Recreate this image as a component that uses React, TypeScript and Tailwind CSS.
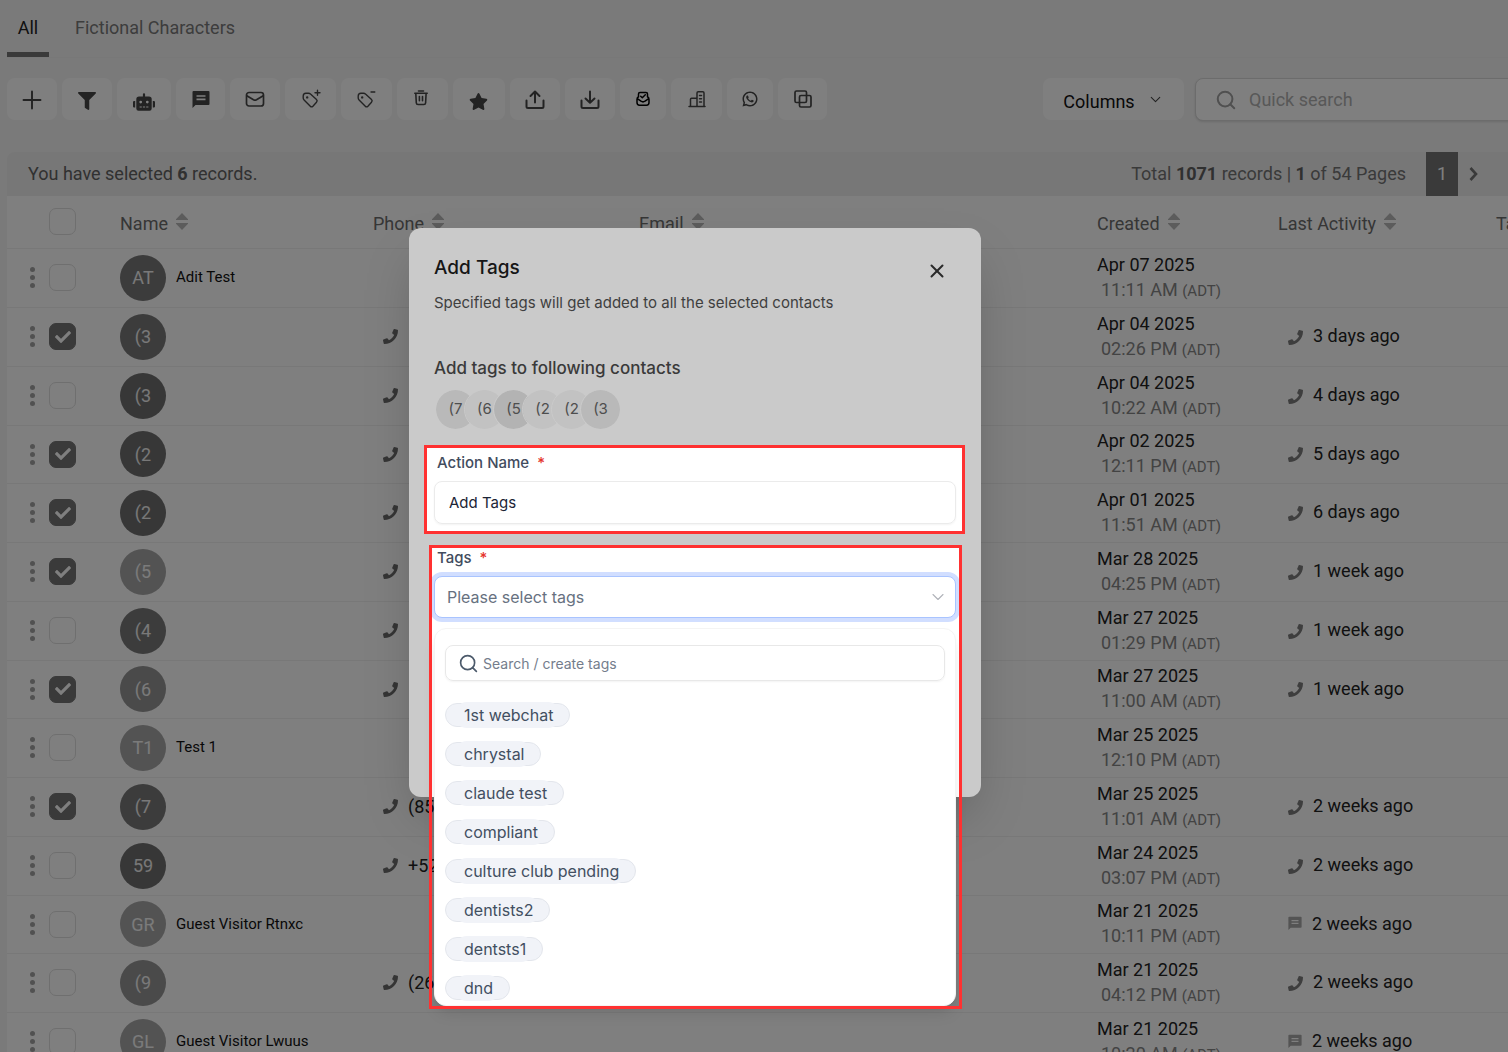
import React from "react";
import { FaCheck, FaFilter, FaPhone, FaRobot, FaStar } from "react-icons/fa";
import { RiWhatsappLine } from "react-icons/ri";
import { ChevronDown, Search, X } from "lucide-react";

type Row = {
  initials: string;
  shade: string;
  name?: string;
  checked?: boolean;
  phone?: string;
  date: string;
  time: string;
  activity?: string;
  kind?: "call" | "chat";
};

const DARK = "bg-[#787878]";
const DARKER = "bg-[#6e6e6e]";
const MID = "bg-[#949494]";
const LIGHT = "bg-[#a6a6a6]";

const rows: Row[] = [
  { initials: "AT", shade: DARK, name: "Adit Test", date: "Apr 07 2025", time: "11:11 AM" },
  { initials: "(3", shade: DARK, checked: true, phone: "", date: "Apr 04 2025", time: "02:26 PM", activity: "3 days ago", kind: "call" },
  { initials: "(3", shade: DARKER, phone: "", date: "Apr 04 2025", time: "10:22 AM", activity: "4 days ago", kind: "call" },
  { initials: "(2", shade: DARKER, checked: true, phone: "", date: "Apr 02 2025", time: "12:11 PM", activity: "5 days ago", kind: "call" },
  { initials: "(2", shade: DARKER, checked: true, phone: "", date: "Apr 01 2025", time: "11:51 AM", activity: "6 days ago", kind: "call" },
  { initials: "(5", shade: LIGHT, checked: true, phone: "", date: "Mar 28 2025", time: "04:25 PM", activity: "1 week ago", kind: "call" },
  { initials: "(4", shade: DARK, phone: "", date: "Mar 27 2025", time: "01:29 PM", activity: "1 week ago", kind: "call" },
  { initials: "(6", shade: MID, checked: true, phone: "", date: "Mar 27 2025", time: "11:00 AM", activity: "1 week ago", kind: "call" },
  { initials: "T1", shade: LIGHT, name: "Test 1", date: "Mar 25 2025", time: "12:10 PM" },
  { initials: "(7", shade: DARK, checked: true, phone: "(85", date: "Mar 25 2025", time: "11:01 AM", activity: "2 weeks ago", kind: "call" },
  { initials: "59", shade: DARKER, phone: "+52", date: "Mar 24 2025", time: "03:07 PM", activity: "2 weeks ago", kind: "call" },
  { initials: "GR", shade: LIGHT, name: "Guest Visitor Rtnxc", date: "Mar 21 2025", time: "10:11 PM", activity: "2 weeks ago", kind: "chat" },
  { initials: "(9", shade: MID, phone: "(26", date: "Mar 21 2025", time: "04:12 PM", activity: "2 weeks ago", kind: "call" },
  { initials: "GL", shade: LIGHT, name: "Guest Visitor Lwuus", date: "Mar 21 2025", time: "10:20 AM", activity: "2 weeks ago", kind: "chat" },
];

const tags = ["1st webchat", "chrystal", "claude test", "compliant", "culture club pending", "dentists2", "dentsts1", "dnd"];

const selected = [
  { text: "(7", shade: "bg-[#b9b9b9]" },
  { text: "(6", shade: "bg-[#c2c2c2]" },
  { text: "(5", shade: "bg-[#b3b3b3]" },
  { text: "(2", shade: "bg-[#c2c2c2]" },
  { text: "(2", shade: "bg-[#c2c2c2]" },
  { text: "(3", shade: "bg-[#b9b9b9]" },
];

function Line({ w = 20, h = 20, sw = 1.6, children }: { w?: number; h?: number; sw?: number; children: React.ReactNode }) {
  return (
    <svg width={w} height={h} viewBox={`0 0 ${w} ${h}`} fill="none" stroke="currentColor" strokeWidth={sw} strokeLinecap="round" strokeLinejoin="round" aria-hidden="true">
      {children}
    </svg>
  );
}

function MessageIcon({ size }: { size: number }) {
  return (
    <svg width={size} height={size} viewBox="0 0 18 18" fill="currentColor" fillRule="evenodd" aria-hidden="true">
      <path d="M1.5 1h15a1 1 0 0 1 1 1v12a1 1 0 0 1-1 1H3.5L.5 18V2a1 1 0 0 1 1-1zM4.5 5.2v1.6h9V5.2zM4.5 8.6v1.6h9V8.6z" />
    </svg>
  );
}

const TAG = "M2.2 7.2c0-2.3.6-3 2.7-3h2.6c.8 0 1.4.2 2 .8l6 5.6c.9.9.9 1.7 0 2.6l-3.6 4c-.9.9-1.8.9-2.6 0l-6.200-6.300c-.6-.6-.9-1.100-.9-1.900z";

const tools = [
  { label: "Add contact", w: "w-[50px] pt-px", icon: <Line sw={1.9}><path d="M10 1.5v17M1.5 10h17" /></Line> },
  { label: "Filter", w: "w-[50px] pt-1", icon: <FaFilter size={18} /> },
  { label: "Automation", w: "w-[54px] pt-1.5", icon: <FaRobot size={22} /> },
  { label: "Send message", w: "w-[49px]", icon: <MessageIcon size={18} /> },
  { label: "Send email", w: "w-[50px]", icon: <Line sw={1.7}><rect x="1.5" y="3.500" width="17" height="13.500" rx="2.500" /><path d="M2.200 7l6.300 3.800c.9.5 2.100.5 3 0l6.300-3.800" /></Line> },
  { label: "Add tags", w: "w-[51px]", icon: <Line sw={1.4}><path d={TAG} /><circle cx="6.200" cy="8.400" r=".5" fill="currentColor" /><path d="M16.500 1.200v5M14 3.700h5" /></Line> },
  { label: "Remove tags", w: "w-[51px] pr-0.5", icon: <Line sw={1.4}><path d={TAG} /><circle cx="6.200" cy="8.400" r=".5" fill="currentColor" /><path d="M15 3h3.800" /></Line> },
  { label: "Delete", w: "w-[51px] pr-1 pb-0.5", icon: <Line sw={1.6}><path d="M3.800 5.200h12.400M7.500 3h5M4.800 5.500l.5 9.500c.1 1 .8 1.500 1.700 1.500h5.900c1 0 1.600-.6 1.700-1.500l.5-9.500M8.400 8.500v4.200M11.500 8.500v4.200" /></Line> },
  { label: "Favorite", w: "w-[52px] pt-1 pr-0.5", icon: <FaStar size={19} /> },
  { label: "Upload", w: "w-[50px] pt-px", icon: <Line sw={2}><path d="M1.500 10.500v6c0 .9.500 1.500 1.500 1.500h14c1 0 1.500-.6 1.500-1.500v-6M10 12.500V1.800M5.500 6L10 1.500 14.500 6" /></Line> },
  { label: "Download", w: "w-[50px] pt-px", icon: <Line sw={2}><path d="M1.500 10.500v6c0 .9.500 1.500 1.500 1.500h14c1 0 1.500-.6 1.500-1.500v-6M10 1.500v11M5.500 8.500l4.500 4.300 4.500-4.300" /></Line> },
  { label: "Verify email", w: "w-[46px] text-black", icon: <Line w={14} h={16} sw={1.5}><path d="M2.500 6V3c0-1 .6-1.500 1.500-1.500h6c.9 0 1.500.5 1.500 1.500v3M2.500 5.800C1.400 6.300 1 7 1 8.200v3.300c0 1.700.8 2.700 2.500 2.700h7c1.700 0 2.500-1 2.500-2.700V8.200c0-1.200-.4-1.900-1.500-2.400M1.300 7.600l3.700 2.600c1.200.8 2.800.8 4 0l3.700-2.600M4.700 5.200l1.600 1.500 3-2.900" /></Line> },
  { label: "Assign company", w: "w-[51px]", icon: <Line w={18} h={18} sw={1.5}><path d="M1 16.500h16M9 16V3c0-.8.400-1.300 1.200-1.300h4.600c.8 0 1.200.5 1.200 1.300v13M2.500 16V9.300c0-.6.400-1 1-1H9M11.500 5.500h2M11.500 8.700h2M11.500 12h2" /></Line> },
  { label: "WhatsApp", w: "w-[46px]", icon: <RiWhatsappLine size={18} /> },
  { label: "Merge", w: "w-[49px]", icon: <Line w={18} h={18} sw={1.7}><rect x="1" y="1" width="11.500" height="11.500" rx="1.500" /><rect x="5.500" y="5.500" width="11.500" height="11.500" rx="1.500" /></Line> },
];

function Sort() {
  return (
    <svg width="12" height="17" viewBox="0 0 12 17" className="text-[#b8b8b8]" fill="currentColor" aria-hidden="true">
      <path d="M6 0l6 6.200V7H0v-.8zM6 17l6-6.200V10H0v.8z" />
    </svg>
  );
}

function HeadCell({ children }: { children: string }) {
  return (
    <th scope="col" className="p-0 text-left font-normal text-[#6c6c6c]">
      <button type="button" className="flex items-center gap-2 pt-1">
        {children}
        <span className="pb-1"><Sort /></span>
      </button>
    </th>
  );
}

function Tick({ checked, label }: { checked?: boolean; label: string }) {
  return (
    <label className="grid w-[27px] place-items-center">
      <input
        type="checkbox"
        defaultChecked={checked}
        aria-label={label}
        className="peer col-start-1 row-start-1 size-[27px] appearance-none rounded-[7px] border border-[#dedede] checked:border-[#747474] checked:bg-[#747474]"
      />
      <FaCheck size={16} className="pointer-events-none z-0 col-start-1 row-start-1 text-white opacity-0 peer-checked:opacity-100" />
    </label>
  );
}

function ContactRow({ row }: { row: Row }) {
  return (
    <tr className="h-[59px] border-b border-[#f1f1f1] nth-[4n]:h-[58px]">
      <td className="p-0">
        <button type="button" aria-label="Row actions" className="ml-[23px] flex flex-col gap-[3px]">
          <span className="size-[5px] rounded-full bg-[#a3a3a3]" />
          <span className="size-[5px] rounded-full bg-[#a3a3a3]" />
          <span className="size-[5px] rounded-full bg-[#a3a3a3]" />
        </button>
      </td>
      <td className="p-0"><Tick checked={row.checked} label={`Select ${row.name ?? row.initials}`} /></td>
      <td className="p-0">
        <div className="flex items-center gap-2.5">
          <span className={`grid size-[46px] shrink-0 place-items-center rounded-full text-[18px] text-white/90 ${row.shade}`}>{row.initials}</span>
          <span className="text-[15px] text-[#111]">{row.name}</span>
        </div>
      </td>
      <td className="p-0">
        {row.phone !== undefined && (
          <div className="flex items-center gap-2.5 pl-2.5 text-[#222]">
            <FaPhone size={15} className="text-[#6b6b6b]" />
            {row.phone}
          </div>
        )}
      </td>
      <td className="p-0" />
      <td className="p-0 leading-[25px]">
        <div className="text-[#222]">{row.date}</div>
        <div className="pl-1 text-[#868686]">
          {row.time} <span className="text-[15px]">(ADT)</span>
        </div>
      </td>
      <td className="p-0">
        {row.activity && (
          <div className="flex items-center gap-2.5 pb-0.5 pl-2.5 text-[#222]">
            <span className={row.kind === "call" ? "pt-[3px] text-[#7d7d7d]" : "text-[#a8a8a8]"}>
              {row.kind === "call" ? <FaPhone size={15} /> : <MessageIcon size={14} />}
            </span>
            {row.activity}
          </div>
        )}
      </td>
      <td className="p-0" />
    </tr>
  );
}

function ContactsPage() {
  return (
    <main className="pl-[7px] text-[18px]">
      <nav className="flex h-[58px] border-b border-[#f1f1f1]">
        <a href="#all" aria-current="page" className="flex h-[57px] w-[42px] items-center justify-center border-b-[5px] border-[#747474] pt-0.5 text-[#222]">All</a>
        <a href="#fictional" className="ml-[26px] flex h-[57px] items-center pb-0.5 text-[#7a7a7a]">Fictional Characters</a>
      </nav>

      <div className="mt-5 flex items-start justify-between">
        <div className="flex gap-[5px]">
          {tools.map((t) => (
            <button key={t.label} type="button" aria-label={t.label} className={`flex h-[42px] items-center justify-center rounded-lg bg-white text-[#474747] ${t.w}`}>
              {t.icon}
            </button>
          ))}
        </div>
        <div className="-mr-2.5 flex gap-[11px]">
          <button type="button" className="flex h-[42px] w-[141px] items-center justify-center gap-3 rounded-lg bg-white pt-1 text-[#111]">
            Columns
            <ChevronDown size={17} strokeWidth={1.5} className="mb-1 text-[#444]" />
          </button>
          <label className="flex h-[43px] w-[323px] items-center gap-3 rounded-lg border border-[#d8d8d8] bg-white pl-[19px] shadow-sm">
            <Search size={22} strokeWidth={2.2} className="shrink-0 text-[#a0a0a0]" />
            <input type="search" aria-label="Quick search" placeholder="Quick search" className="w-full bg-transparent outline-none placeholder:text-[#b0b0b0]" />
          </label>
        </div>
      </div>

      <div className="mt-[31px] flex h-11 items-center justify-between rounded-tl-lg bg-[#eeeeee] pl-[21px] text-[#626262]">
        <p className="pb-0.5">You have selected <b>6</b> records.</p>
        <div className="flex items-center text-[#747474]">
          <p className="pb-0.5">Total <b className="text-[#606060]">1071</b> records | <b className="text-[#606060]">1</b> of 54 Pages</p>
          <button type="button" className="ml-5 h-11 w-8 bg-[#747474] pb-0.5 text-white">1</button>
          <button type="button" aria-label="Next page" className="grid h-11 w-[50px] justify-start pl-[11px] text-[#747474]">
            <svg width="9" height="14" viewBox="0 0 9 14" fill="none" stroke="currentColor" strokeWidth="2.600" className="self-center" aria-hidden="true">
              <path d="M1.500 1l5.500 6-5.500 6" />
            </svg>
          </button>
        </div>
      </div>

      <table className="w-[calc(100%+148px)] table-fixed border-collapse bg-white">
        <colgroup>
          <col className="w-[42px]" />
          <col className="w-[71px]" />
          <col className="w-[253px]" />
          <col className="w-[266px]" />
          <col />
          <col className="w-[181px]" />
          <col className="w-[218px]" />
          <col className="w-[160px]" />
        </colgroup>
        <thead>
          <tr className="h-[52px] border-b border-[#f1f1f1]">
            <td className="p-0" />
            <td className="p-0"><Tick label="Select all" /></td>
            <HeadCell>Name</HeadCell>
            <HeadCell>Phone</HeadCell>
            <HeadCell>Email</HeadCell>
            <HeadCell>Created</HeadCell>
            <HeadCell>Last Activity</HeadCell>
            <HeadCell>Tags</HeadCell>
          </tr>
        </thead>
        <tbody>
          {rows.map((row, i) => <ContactRow key={i} row={row} />)}
        </tbody>
      </table>
    </main>
  );
}

function AddTagsDialog() {
  return (
    <div role="dialog" aria-labelledby="dialog-title" className="w-[572px] rounded-xl bg-[#cacaca] pt-7 shadow-2xl font-['Inter',sans-serif]">
      <div className="flex justify-between px-[25px]">
        <div>
          <h2 id="dialog-title" className="text-[19px] leading-6 font-medium text-[#161616]">Add Tags</h2>
          <p className="mt-[13px] text-[15px] leading-5 text-[#3f3f3f]">Specified tags will get added to all the selected contacts</p>
        </div>
        <button type="button" aria-label="Close" className="mt-1 mr-2 self-start text-[#2a2a2a]">
          <X size={22} strokeWidth={2.2} />
        </button>
      </div>

      <h3 className="mt-[43px] px-[25px] text-[17px] leading-6 font-medium text-[#3a3a3a]">Add tags to following contacts</h3>
      <div className="mt-[9px] flex px-[26px]">
        {selected.map((s, i) => (
          <span key={i} className={`-mr-3 grid size-[41px] place-items-center rounded-full border border-[#cacaca] bg-clip-padding text-[15px] text-[#4e4e4e] ${s.shade}`}>{s.text}</span>
        ))}
      </div>

      <div className="mt-[15px] mr-4 ml-[15px] border-3 border-[#ff3131] bg-white pt-[5px] pr-1.5 pb-[7px] pl-[7px]">
        <label htmlFor="action-name" className="block pl-[3px] text-[15px] leading-5 font-medium text-[#424c5e]">
          Action Name <span className="ml-1 text-[#e5352b]">*</span>
        </label>
        <input id="action-name" defaultValue="Add Tags" className="mt-2 block h-[43px] w-full rounded-lg border border-[#ebebeb] px-3.5 text-[15px] text-[#1c2536] shadow-xs outline-none" />
      </div>

      <div className="relative mt-[11px] mr-[19px] ml-5 h-[252px] bg-white pt-[3px] pr-1.5 pl-[5px]">
        <label htmlFor="tags" className="block pl-[3px] text-[15px] leading-5 font-medium text-[#424c5e]">
          Tags <span className="ml-1 text-[#e5352b]">*</span>
        </label>
        <div className="relative mt-2">
          <select id="tags" className="block h-[42px] w-full appearance-none rounded-lg border border-[#a9c4ff] bg-white px-3 text-[16px] text-[#67717f] ring-4 ring-[#d1deff] outline-none">
            <option>Please select tags</option>
          </select>
          <ChevronDown size={20} strokeWidth={1.3} className="pointer-events-none absolute top-[11px] right-2 text-[#b0b3b9]" />
        </div>

        <div className="absolute top-[83px] right-1.5 left-[5px] h-[378px] overflow-hidden rounded-xl border border-[#f4f4f4] bg-white px-2.5 pt-4 shadow-lg">
          <label className="flex h-9 items-center gap-1 rounded-lg border border-[#e8e8e8] pl-3 shadow-xs">
            <Search size={21} strokeWidth={1.9} className="shrink-0 text-[#4c5a6b]" />
            <input aria-label="Search or create tags" placeholder="Search / create tags" className="w-full text-[14px] outline-none placeholder:text-[#747d8c]" />
          </label>
          <ul className="mt-[22px] flex flex-col items-start gap-[15px]">
            {tags.map((tag) => (
              <li key={tag} className="h-6">
                <button type="button" className="flex h-6 items-center rounded-full border border-[#e3e6ec] bg-[#f1f3f8] px-2 text-[16px] text-[#424f61]">
                  <span className="h-[26px] rounded-full bg-[#f1f3f8] pr-2 pl-2.5 leading-[26px]">{tag}</span>
                </button>
              </li>
            ))}
          </ul>
        </div>
        <div className="pointer-events-none absolute inset-x-0 top-0 h-[464px] border-3 border-[#ff3131]" />
      </div>
    </div>
  );
}

export default function App() {
  return (
    <div className="relative h-screen overflow-hidden bg-[#f5f5f5] font-['Roboto',sans-serif]">
      <ContactsPage />
      <div className="absolute inset-0 flex items-start justify-center bg-black/50 pt-[228px] pr-[118px]">
        <AddTagsDialog />
      </div>
    </div>
  );
}
